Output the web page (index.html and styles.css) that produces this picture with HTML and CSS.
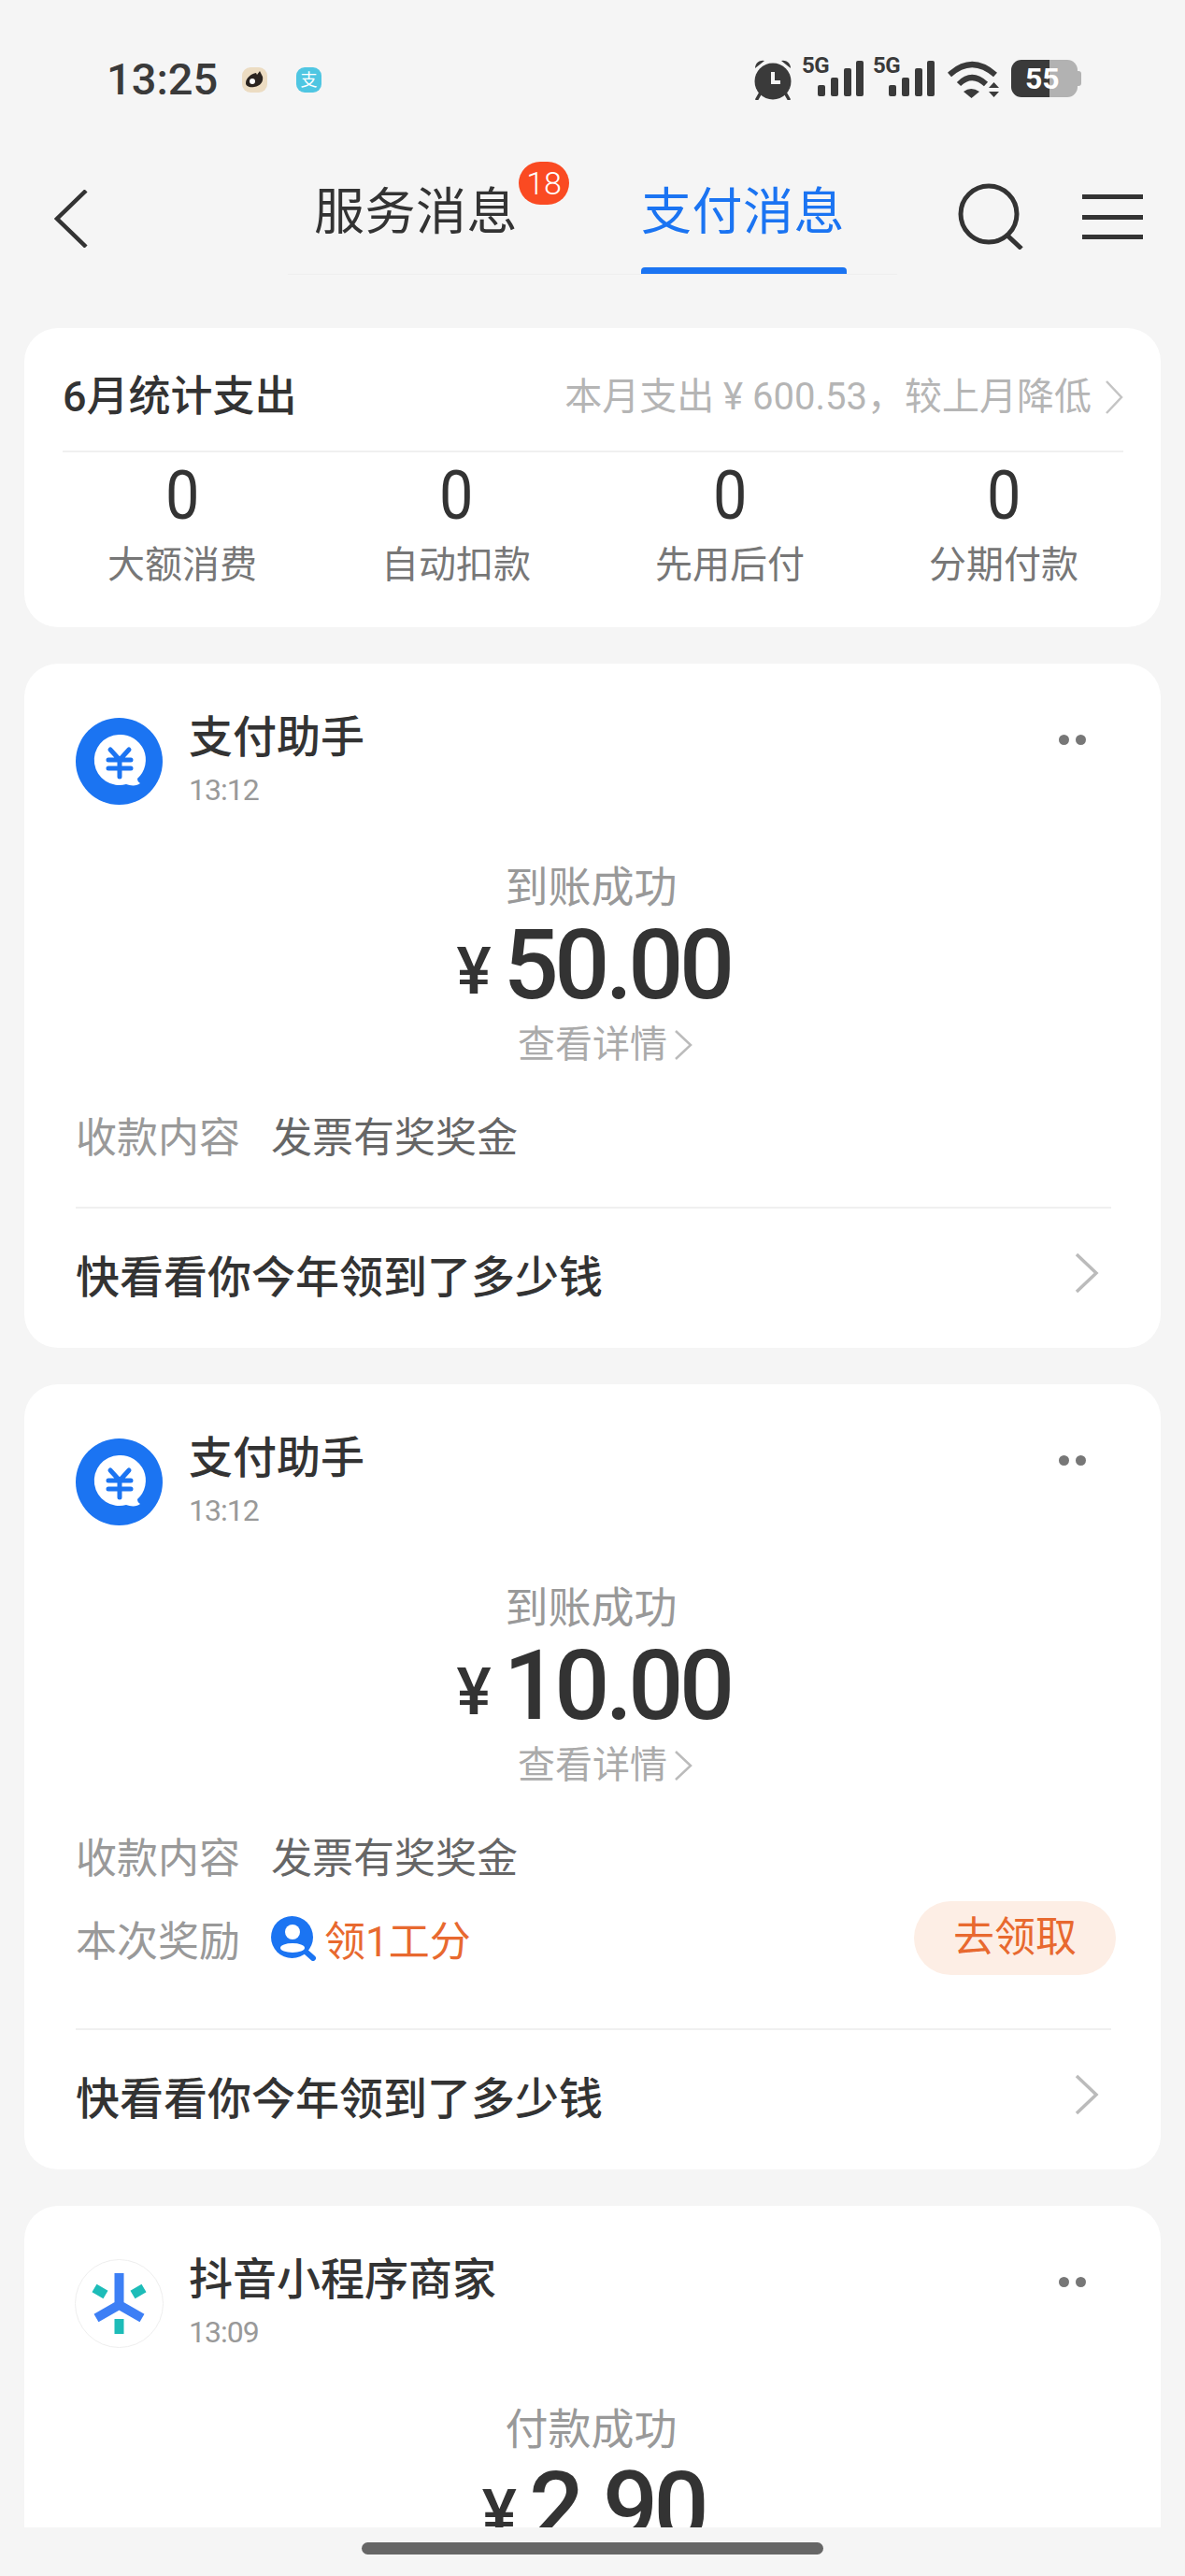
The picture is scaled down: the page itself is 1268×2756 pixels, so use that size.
FILE: index.html
```html
<!DOCTYPE html>
<html lang="zh-CN">
<head>
<meta charset="utf-8">
<title>支付消息</title>
<link rel="stylesheet" href="styles.css">
</head>
<body>
<div class="screen">
  <header class="status">
    <div class="status-left">
      <span class="clock">13:25</span>
      <span class="app-icon app-weibo">
        <svg width="27" height="27" viewBox="0 0 27 27"><path d="M4 17c0-6 6-10 11-11l1 2 3-4 3 6c1 5-2 10-9 11-5 1-9-1-9-4z" fill="#2b2420"/><circle cx="11" cy="15" r="3" fill="#fff"/></svg>
      </span>
      <span class="app-icon app-alipay">支</span>
    </div>
    <div class="status-right">
      <svg class="alarm" width="40" height="45" viewBox="0 0 40 45"><path d="M1 11a8 8 0 0 1 10-8zM39 11a8 8 0 0 0-10-8z" fill="#3a3a3a"/><path d="M7 37l-4 7M33 37l4 7" stroke="#3a3a3a" stroke-width="3.5" stroke-linecap="round"/><circle cx="20" cy="25" r="19.500" fill="#3a3a3a"/><path d="M20 15v11h8" fill="none" stroke="#f5f5f5" stroke-width="4"/></svg>
      <span class="signal">
        <span class="net">5G</span>
        <svg width="49" height="38" viewBox="0 0 49 38"><rect x="0" y="26" width="8" height="12" rx="2"/><rect x="14" y="18" width="8" height="20" rx="2"/><rect x="28" y="8" width="8" height="30" rx="2"/><rect x="41" y="0" width="8" height="38" rx="2"/></svg>
      </span>
      <span class="signal">
        <span class="net">5G</span>
        <svg width="49" height="38" viewBox="0 0 49 38"><rect x="0" y="26" width="8" height="12" rx="2"/><rect x="14" y="18" width="8" height="20" rx="2"/><rect x="28" y="8" width="8" height="30" rx="2"/><rect x="41" y="0" width="8" height="38" rx="2"/></svg>
      </span>
      <svg class="wifi" width="55" height="40" viewBox="0 0 55 40"><path d="M2 15Q26-7 51 15" fill="none" stroke="#3a3a3a" stroke-width="6"/><path d="M12 25Q26 11 41 25" fill="none" stroke="#3a3a3a" stroke-width="6"/><path d="M17 33Q25 27 34 33L25.500 40Z" fill="#3a3a3a"/><path d="M44 29L49.500 23L55 29ZM44 33H55L49.500 39Z" fill="#3a3a3a"/></svg>
      <span class="battery">55</span>
    </div>
  </header>

  <nav class="nav">
    <svg class="nav-back" width="36" height="62" viewBox="0 0 36 62"><path d="M34 1L3 31L34 61" fill="none" stroke="#333" stroke-width="4.500"/></svg>
    <div class="tabs">
      <span class="tab">服务消息<span class="badge">18</span></span>
      <span class="tab tab-active">支付消息</span>
    </div>
    <svg class="nav-search" width="70" height="71" viewBox="0 0 70 71"><circle cx="33" cy="33" r="30" fill="none" stroke="#333" stroke-width="5"/><path d="M53 56L68 70" stroke="#333" stroke-width="5"/></svg>
    <div class="nav-menu"><i></i><i></i><i></i></div>
  </nav>

  <main class="list">
    <section class="card summary">
      <div class="summary-head">
        <h2 class="summary-title">6月统计支出</h2>
        <span class="summary-note">本月支出 ¥ 600.53，较上月降低</span>
        <svg class="chev-sm" width="20" height="36" viewBox="0 0 20 36"><path d="M2 1L18 18L2 35" fill="none" stroke="#c4c4c4" stroke-width="2.500"/></svg>
      </div>
      <div class="stats">
        <div class="stat"><b>0</b><span>大额消费</span></div>
        <div class="stat"><b>0</b><span>自动扣款</span></div>
        <div class="stat"><b>0</b><span>先用后付</span></div>
        <div class="stat"><b>0</b><span>分期付款</span></div>
      </div>
    </section>

    <article class="card msg">
      <div class="msg-head">
        <svg class="avatar" width="93" height="93" viewBox="0 0 93 93"><circle cx="46.500" cy="46.500" r="46.500" fill="#1b74f2"/><path d="M46 18a27 27 0 1 0 8 53c5 2 12 2 15-1-2-1-3-3-3-5a27 27 0 0 0-20-47z" fill="#fff"/><path d="M37 34L47 45L57 34M35 45H59M35 54H59M47 45V63" fill="none" stroke="#1b74f2" stroke-width="5" stroke-linecap="round"/></svg>
        <div class="msg-meta"><div class="msg-name">支付助手</div><div class="msg-time">13:12</div></div>
        <div class="dots"><i></i><i></i></div>
      </div>
      <div class="pay">
        <div class="pay-label">到账成功</div>
        <div class="pay-amount"><span class="yen">¥</span>50.00</div>
        <div class="pay-link">查看详情<svg width="22" height="34" viewBox="0 0 22 34"><path d="M3 2L19 17L3 32" fill="none" stroke="#bbb" stroke-width="2.500"/></svg></div>
      </div>
      <div class="row"><span class="row-key">收款内容</span><span class="row-val">发票有奖奖金</span></div>
      <div class="promo"><span>快看看你今年领到了多少钱</span><svg width="26" height="44" viewBox="0 0 26 44"><path d="M2 2L23 22L2 42" fill="none" stroke="#bbb" stroke-width="3.500"/></svg></div>
    </article>

    <article class="card msg">
      <div class="msg-head">
        <svg class="avatar" width="93" height="93" viewBox="0 0 93 93"><circle cx="46.500" cy="46.500" r="46.500" fill="#1b74f2"/><path d="M46 18a27 27 0 1 0 8 53c5 2 12 2 15-1-2-1-3-3-3-5a27 27 0 0 0-20-47z" fill="#fff"/><path d="M37 34L47 45L57 34M35 45H59M35 54H59M47 45V63" fill="none" stroke="#1b74f2" stroke-width="5" stroke-linecap="round"/></svg>
        <div class="msg-meta"><div class="msg-name">支付助手</div><div class="msg-time">13:12</div></div>
        <div class="dots"><i></i><i></i></div>
      </div>
      <div class="pay">
        <div class="pay-label">到账成功</div>
        <div class="pay-amount"><span class="yen">¥</span>10.00</div>
        <div class="pay-link">查看详情<svg width="22" height="34" viewBox="0 0 22 34"><path d="M3 2L19 17L3 32" fill="none" stroke="#bbb" stroke-width="2.500"/></svg></div>
      </div>
      <div class="row"><span class="row-key">收款内容</span><span class="row-val">发票有奖奖金</span></div>
      <div class="row row-reward">
        <span class="row-key">本次奖励</span>
        <svg class="reward-icon" width="48" height="48" viewBox="0 0 48 48"><path d="M36 37L45 45" stroke="#1b74f2" stroke-width="6" stroke-linecap="round"/><circle cx="22.500" cy="22.500" r="22.500" fill="#1b74f2"/><circle cx="23" cy="17" r="8" fill="#fff"/><ellipse cx="23" cy="34" rx="13" ry="5" fill="#fff"/></svg>
        <span class="reward-text">领1工分</span>
        <span class="claim">去领取</span>
      </div>
      <div class="promo"><span>快看看你今年领到了多少钱</span><svg width="26" height="44" viewBox="0 0 26 44"><path d="M2 2L23 22L2 42" fill="none" stroke="#bbb" stroke-width="3.500"/></svg></div>
    </article>

    <article class="card msg">
      <div class="msg-head">
        <svg class="avatar avatar-logo" width="95" height="95" viewBox="0 0 95 95"><circle cx="47.500" cy="47.500" r="47" fill="#fff" stroke="#eee"/><path d="M47.500 15V49M23 63L47.500 49L72 63" fill="none" stroke="#3d7ff5" stroke-width="10"/><path d="M21 31L33 38M74 31L62 38M47.500 64V80" fill="none" stroke="#1dbcb8" stroke-width="10"/></svg>
        <div class="msg-meta"><div class="msg-name">抖音小程序商家</div><div class="msg-time">13:09</div></div>
        <div class="dots"><i></i><i></i></div>
      </div>
      <div class="pay">
        <div class="pay-label">付款成功</div>
        <div class="pay-amount"><span class="yen">¥</span>2.90</div>
      </div>
    </article>
  </main>
  <footer class="home"><i></i></footer>
</div>
</body>
</html>
```

FILE: styles.css
```css
* { box-sizing: border-box; }
html, body { margin: 0; padding: 0; background: #f5f5f5; }
body { font-family: "Roboto", "Noto Sans CJK SC", sans-serif; color: #333; }
.screen { width: 1268px; height: 2756px; overflow: hidden; display: flex; flex-direction: column; }

/* status bar */
.status { height: 140px; flex: none; display: flex; justify-content: space-between; padding: 60px 115px 0 114px; align-items: flex-start; }
.status-left { display: flex; align-items: center; height: 50px; }
.clock { font-size: 47px; font-weight: 500; color: #3a3a3a; line-height: 50px; width: 145px; }
.app-icon { width: 27px; height: 27px; border-radius: 9px; display: flex; align-items: center; justify-content: center; }
.app-weibo { background: #ecdcc2; margin-right: 31px; }
.app-alipay { background: #4fc6e2; color: #fff; font-size: 18px; line-height: 27px; }
.status-right { display: flex; align-items: flex-start; }
.alarm { margin: 2px 28px 0 0; }
.signal { position: relative; width: 49px; height: 44px; margin-top: 5px; margin-right: 27px; fill: #3a3a3a; }
.signal + .signal { margin-right: 14px; }
.net { position: absolute; left: -17px; top: -7px; font-size: 24px; line-height: 24px; font-weight: 700; color: #3a3a3a; letter-spacing: -0.5px; }
.signal svg { display: block; }
.wifi { margin: 5px 13px 0 0; }
.battery { position: relative; width: 71px; height: 40px; margin-top: 4px; border-radius: 11px; background: linear-gradient(90deg, #3a3a3a 41px, #b2b2b2 41px); color: #fff; font-size: 32px; font-weight: 700; line-height: 40px; text-align: left; padding-left: 15px; }
.battery::after { content: ""; position: absolute; right: -4px; top: 12px; width: 4px; height: 16px; background: #b2b2b2; border-radius: 0 3px 3px 0; }

/* nav */
.nav { height: 154px; flex: none; display: flex; align-items: flex-end; padding-left: 58px; }
.nav-back { margin-bottom: 29px; }
.tabs { margin-left: 214px; width: 652px; height: 154px; display: flex; align-items: flex-start; gap: 132px; padding: 56px 0 0 28px; border-bottom: 1px solid #eeeeee; }
.tab { position: relative; font-size: 54px; line-height: 64px; width: 220px; letter-spacing: 0.5px; color: #333; height: 97px; }
.tab-active { color: #1b74f2; margin-left: -2px; }
.tab-active::after { content: ""; position: absolute; left: 0; right: 0; bottom: 0; height: 7px; border-radius: 4px 4px 0 0; background: #1b74f2; }
.badge { position: absolute; left: 219px; top: -23px; width: 54px; height: 46px; border-radius: 23px; background: #fa4a22; color: #fff; font-size: 34px; font-weight: 300; line-height: 46px; text-align: center; letter-spacing: 0; }
.nav-search { margin: 0 0 27px 65px; }
.nav-menu { margin: 0 0 38px 63px; width: 65px; height: 48px; display: flex; flex-direction: column; justify-content: space-between; }
.nav-menu i { display: block; height: 5px; background: #333; }

/* list */
.list { height: 2410px; flex: none; overflow: hidden; padding: 57px 26px 0; display: flex; flex-direction: column; gap: 39px; }
.card { flex: none; background: #fff; border-radius: 36px; }
.summary { height: 320px; padding: 0 40px 0 41px; }
.summary-head { height: 133px; padding-top: 17px; border-bottom: 2px solid #f0f0f0; display: flex; align-items: center; }
.summary-title { margin: 0; font-size: 45px; font-weight: 500; color: #333; line-height: 60px; flex: 1; }
.summary-note { font-size: 40px; color: #b5b5b5; line-height: 60px; }
.chev-sm { margin-left: 14px; }
.stats { display: grid; grid-template-columns: repeat(4, 1fr); column-gap: 37px; }
.stat { display: flex; flex-direction: column; align-items: center; }
.stat b { font-size: 72px; font-weight: 400; line-height: 80px; margin-top: 7px; color: #333; transform: scaleX(0.9); }
.stat span { font-size: 40px; line-height: 56px; color: #777; margin-top: 6px; }

.msg { padding: 51px 53px 11px 55px; }
.msg-head { display: flex; align-items: flex-start; height: 104px; }
.avatar { flex: none; margin: 7px 0 0 0; display: block; }
.avatar-logo { margin: 6px -1px 0 -1px; }
.msg-meta { margin-left: 28px; flex: 1; }
.msg-name { font-size: 47px; line-height: 56px; font-weight: 500; color: #333; }
.msg-time { font-size: 32px; line-height: 40px; margin-top: 8px; color: #999; letter-spacing: -1px; }
.dots { display: flex; gap: 7px; padding-top: 25px; margin-right: 27px; }
.dots i { display: block; width: 11px; height: 11px; border-radius: 50%; background: #777; }
.pay { margin-top: 54px; display: flex; flex-direction: column; align-items: center; }
.pay-label { font-size: 46px; line-height: 60px; color: #999; margin-right: 5px; }
.pay-amount { height: 108px; font-size: 104px; line-height: 108px; font-weight: 500; color: #333; letter-spacing: -4.500px; }
.yen { font-size: 70px; margin-right: 13px; letter-spacing: 0; vertical-align: 5px; }
.pay-link { font-size: 40px; line-height: 56px; color: #aaa; margin-top: 3px; display: flex; align-items: center; padding-left: 26px; }
.pay-link svg { margin-left: 6px; }
.row { display: flex; align-items: center; margin-top: 38px; height: 60px; font-size: 44px; }
.row-key { color: #999; width: 209px; }
.row-val { color: #666; }
.row-reward { margin-top: 19px; height: 79px; }
.reward-icon { margin-right: 9px; }
.reward-text { color: #e8692f; flex: 1; }
.claim { width: 216px; height: 79px; margin-right: -5px; border-radius: 40px; background: #fdeee5; color: #e8692f; line-height: 79px; text-align: center; }
.promo { margin-top: 47px; height: 140px; border-top: 2px solid #f0f0f0; display: flex; align-items: center; justify-content: space-between; font-size: 47px; font-weight: 500; color: #333; padding-right: 13px; }
.row-reward + .promo { margin-top: 57px; }

/* home indicator */
.home { flex: 1; padding: 16px 0 0 387px; }
.home i { display: block; width: 494px; height: 13px; border-radius: 7px; background: #666; }
```
